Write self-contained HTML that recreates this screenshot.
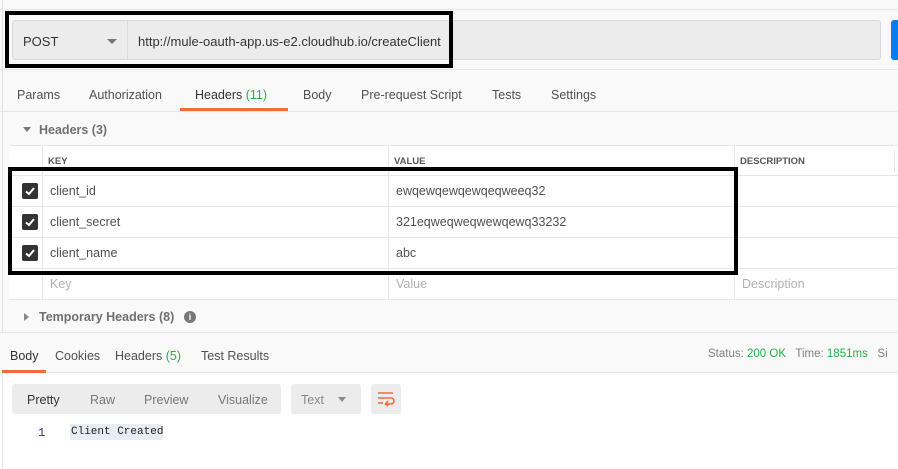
<!DOCTYPE html>
<html><head><style>
*{box-sizing:border-box;margin:0;padding:0}
body{width:898px;height:469px;overflow:hidden;background:#fff;font-family:"Liberation Sans",sans-serif;font-size:12.5px;color:#505050;position:relative}
.a{position:absolute}
.t{position:absolute;white-space:nowrap}
.cb{position:absolute;left:22px;width:16px;height:16px;background:#333;border-radius:2px}
.cb svg{position:absolute;left:2px;top:2px}
</style></head><body>
<div class="a" style="left:0;top:0;width:898px;height:332px;background:#f9f9f9"></div>
<div class="a" style="left:0;top:9px;width:898px;height:1px;background:#e6e6e6"></div>
<div class="a" style="left:2px;top:0;width:1px;height:469px;background:#e2e2e2"></div>
<!-- url bar -->
<div class="a" style="left:12px;top:20px;width:869px;height:40px;background:#ececec;border:1px solid #d8d8d8;border-radius:3px"></div>
<div class="a" style="left:127px;top:21px;width:1px;height:38px;background:#dcdcdc"></div>
<div class="t" style="left:23px;top:34px;color:#333;font-size:13px">POST</div>
<div class="a" style="left:107px;top:39px;border-left:5px solid transparent;border-right:5px solid transparent;border-top:5px solid #777"></div>
<div class="t" style="left:138px;top:34px;color:#333;font-size:13px">http://mule-oauth-app.us-e2.cloudhub.io/createClient</div>
<div class="a" style="left:891px;top:20px;width:10px;height:40px;background:#097bed;border-radius:3px"></div>
<div class="a" style="left:5px;top:11px;width:448px;height:57px;border:4px solid #000"></div>
<div class="a" style="left:0;top:69px;width:898px;height:1px;background:#e6e6e6"></div>
<!-- tabs -->
<div class="t" style="left:17px;top:88px">Params</div>
<div class="t" style="left:89px;top:88px">Authorization</div>
<div class="t" style="left:195px;top:88px;color:#333">Headers <span style="color:#26b047">(11)</span></div>
<div class="t" style="left:303px;top:88px">Body</div>
<div class="t" style="left:361px;top:88px">Pre-request Script</div>
<div class="t" style="left:492px;top:88px">Tests</div>
<div class="t" style="left:551px;top:88px">Settings</div>
<div class="a" style="left:180px;top:108px;width:108px;height:3px;background:#f26b3a"></div>
<div class="a" style="left:0;top:111px;width:898px;height:1px;background:#e6e6e6"></div>
<div class="a" style="left:23px;top:127px;border-left:4px solid transparent;border-right:4px solid transparent;border-top:5px solid #777"></div>
<div class="t" style="left:39px;top:123px;font-weight:bold;color:#707070">Headers (3)</div>
<!-- table -->
<div class="a" style="left:10px;top:145px;width:888px;height:155px;background:#fff;border-top:1px solid #e6e6e6"></div>
<div class="a" style="left:10px;top:175px;width:888px;height:1px;background:#e6e6e6"></div>
<div class="a" style="left:10px;top:206px;width:888px;height:1px;background:#e6e6e6"></div>
<div class="a" style="left:10px;top:237px;width:888px;height:1px;background:#e6e6e6"></div>
<div class="a" style="left:10px;top:268px;width:888px;height:1px;background:#e6e6e6"></div>
<div class="a" style="left:10px;top:299px;width:888px;height:1px;background:#e6e6e6"></div>
<div class="a" style="left:42px;top:145px;width:1px;height:155px;background:#e6e6e6"></div>
<div class="a" style="left:388px;top:145px;width:1px;height:155px;background:#e6e6e6"></div>
<div class="a" style="left:734px;top:145px;width:1px;height:155px;background:#e6e6e6"></div>
<div class="a" style="left:894px;top:150px;width:1px;height:22px;background:#e6e6e6"></div>
<div class="t" style="left:48px;top:156px;font-size:9.5px;font-weight:bold;color:#555">KEY</div>
<div class="t" style="left:394px;top:156px;font-size:9.5px;font-weight:bold;color:#555">VALUE</div>
<div class="t" style="left:740px;top:156px;font-size:9.5px;font-weight:bold;color:#555">DESCRIPTION</div>
<div class="cb" style="top:183px"><svg width="12" height="12"><path d="M2 6.5L5 9L10 3" stroke="#fff" stroke-width="2" fill="none"/></svg></div>
<div class="cb" style="top:214px"><svg width="12" height="12"><path d="M2 6.5L5 9L10 3" stroke="#fff" stroke-width="2" fill="none"/></svg></div>
<div class="cb" style="top:245px"><svg width="12" height="12"><path d="M2 6.5L5 9L10 3" stroke="#fff" stroke-width="2" fill="none"/></svg></div>
<div class="t" style="left:50px;top:184px">client_id</div>
<div class="t" style="left:50px;top:215px">client_secret</div>
<div class="t" style="left:50px;top:246px">client_name</div>
<div class="t" style="left:396px;top:184px">ewqewqewqewqeqweeq32</div>
<div class="t" style="left:396px;top:215px">321eqweqweqwewqewq33232</div>
<div class="t" style="left:396px;top:246px">abc</div>
<div class="t" style="left:50px;top:277px;color:#b0b0b0">Key</div>
<div class="t" style="left:396px;top:277px;color:#b0b0b0">Value</div>
<div class="t" style="left:742px;top:277px;color:#b0b0b0">Description</div>
<div class="a" style="left:8px;top:167px;width:730px;height:108px;border:4px solid #000"></div>
<div class="a" style="left:24px;top:313px;border-top:4px solid transparent;border-bottom:4px solid transparent;border-left:5px solid #888"></div>
<div class="t" style="left:39px;top:310px;font-weight:bold;color:#707070">Temporary Headers (8)</div>
<div class="a" style="left:184px;top:311px;width:12px;height:12px;border-radius:50%;background:#777;color:#fff;font-size:9px;font-weight:bold;text-align:center;line-height:12px">i</div>
<!-- response -->
<div class="a" style="left:0;top:332px;width:898px;height:41px;background:#f9f9f9;border-top:1px solid #e6e6e6;border-bottom:1px solid #e6e6e6"></div>
<div class="t" style="left:10px;top:349px;color:#333">Body</div>
<div class="t" style="left:55px;top:349px">Cookies</div>
<div class="t" style="left:115px;top:349px">Headers <span style="color:#26b047">(5)</span></div>
<div class="t" style="left:201px;top:349px">Test Results</div>
<div class="a" style="left:2px;top:370px;width:44px;height:3px;background:#f26b3a"></div>
<div class="t" style="left:708px;top:348px;font-size:11.5px;color:#808080">Status: <span style="color:#26b047">200 OK</span> &nbsp; Time: <span style="color:#26b047">1851ms</span> &nbsp; Si</div>
<div class="a" style="left:12px;top:384px;width:269px;height:30px;background:#ececec;border-radius:3px"></div>
<div class="t" style="left:27px;top:393px;color:#333">Pretty</div>
<div class="t" style="left:90px;top:393px;color:#777">Raw</div>
<div class="t" style="left:144px;top:393px;color:#777">Preview</div>
<div class="t" style="left:218px;top:393px;color:#777">Visualize</div>
<div class="a" style="left:291px;top:384px;width:70px;height:30px;background:#ececec;border-radius:3px"></div>
<div class="t" style="left:301px;top:393px;color:#888">Text</div>
<div class="a" style="left:338px;top:397px;border-left:4px solid transparent;border-right:4px solid transparent;border-top:5px solid #888"></div>
<div class="a" style="left:371px;top:384px;width:30px;height:30px;background:#ececec;border-radius:3px"></div>
<svg class="a" style="left:377px;top:391px" width="18" height="16"><path d="M1 2H16M1 7H14a3 3 0 0 1 0 6H9M1 12H6M11 10L8.5 13L11 15" stroke="#f26b3a" stroke-width="1.6" fill="none"/></svg>
<div class="t" style="left:38px;top:426px;color:#1f3a8a;font-family:'Liberation Mono',monospace;font-size:12px">1</div>
<div class="a" style="left:70px;top:424px;width:93px;height:16px;background:#e8edf3;border-radius:2px"></div>
<div class="t" style="left:71px;top:426px;color:#222;font-family:'Liberation Mono',monospace;font-size:11px">Client Created</div>
</body></html>
